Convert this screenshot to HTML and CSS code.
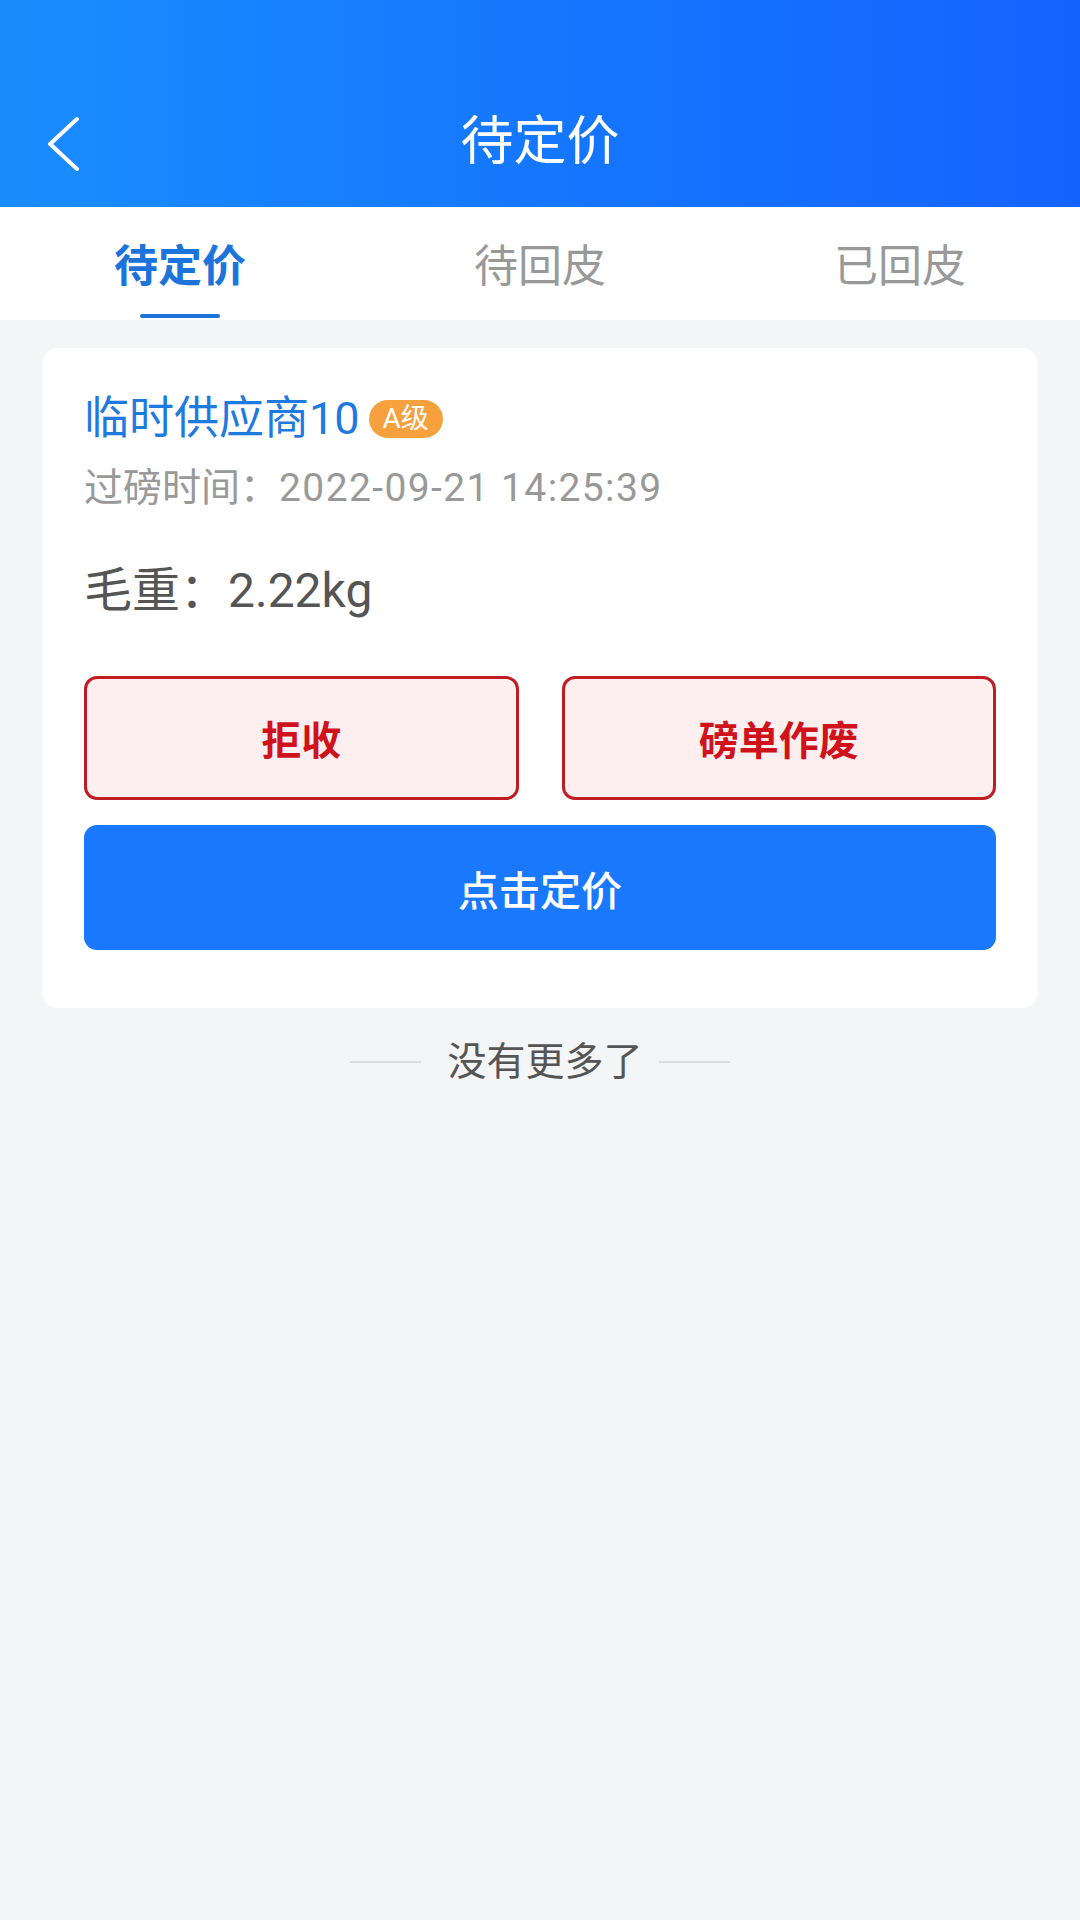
FILE: index.html
```html
<!DOCTYPE html>
<html lang="zh-CN">
<head>
<meta charset="utf-8">
<title>待定价</title>
<link rel="stylesheet" href="styles.css">
</head>
<body>
<div class="page">
  <header class="header">
    <div class="titlebar">
      <a class="back" aria-label="返回">
        <svg width="40" height="60" viewBox="0 0 40 60"><polyline points="33,8 6,33 33,58" fill="none" stroke="#fff" stroke-width="4" stroke-linecap="round" stroke-linejoin="round"/></svg>
      </a>
      <h1 class="title">待定价</h1>
    </div>
  </header>
  <nav class="tabs">
    <div class="tab active">待定价<span class="indicator"></span></div>
    <div class="tab">待回皮</div>
    <div class="tab">已回皮</div>
  </nav>
  <main class="list">
    <section class="card">
      <div class="name-row">
        <span class="name">临时供应商10</span>
        <span class="badge">A级</span>
      </div>
      <div class="time">过磅时间：<span class="num">2022-09-21 14:25:39</span></div>
      <div class="weight">毛重：2.22kg</div>
      <div class="actions">
        <button class="btn-outline">拒收</button>
        <button class="btn-outline">磅单作废</button>
      </div>
      <button class="btn-primary">点击定价</button>
    </section>
    <div class="nomore">
      <span class="line"></span>
      <span class="nomore-text">没有更多了</span>
      <span class="line"></span>
    </div>
  </main>
</div>
</body>
</html>
```

FILE: styles.css
```css
* { box-sizing: border-box; }
html, body { margin: 0; padding: 0; }
body {
  width: 1080px;
  min-height: 1920px;
  background: #f4f5f7;
  font-family: Roboto, "Noto Sans CJK SC", sans-serif;
}
.page { width: 1080px; min-height: 1920px; background: #f4f5f7; }

.header {
  height: 207px;
  padding-top: 77px;
  background: linear-gradient(90deg, #1a8dfe 0%, #1577fe 50%, #1463fe 100%);
}
.titlebar {
  height: 130px;
  display: flex;
  align-items: center;
  justify-content: center;
  position: relative;
}
.back {
  position: absolute;
  left: 44px;
  top: 34px;
  width: 40px;
  height: 60px;
  display: block;
}
.back svg { display: block; }
.title {
  margin: 0;
  color: #fff;
  font-size: 53px;
  font-weight: 400;
  line-height: 1;
}

.tabs {
  height: 113px;
  background: #fff;
  display: grid;
  grid-template-columns: repeat(3, 1fr);
}
.tab {
  position: relative;
  display: flex;
  align-items: center;
  justify-content: center;
  font-size: 44px;
  color: #999999;
  padding-bottom: 2px;
}
.tab.active {
  color: #1c73d9;
  font-weight: 700;
}
.indicator {
  position: absolute;
  left: 140px;
  width: 80px;
  bottom: 2px;
  height: 4px;
  border-radius: 2px;
  background: #1c73d9;
}

.list { padding: 28px 42px 0; }
.card {
  background: #fff;
  border-radius: 16px;
  padding: 40px 42px 58px;
  display: flex;
  flex-direction: column;
}
.name-row {
  height: 62px;
  display: flex;
  align-items: center;
}
.name {
  font-size: 45px;
  color: #1f7ae0;
  line-height: 62px;
}
.badge {
  margin-left: 9px;
  height: 38px;
  padding: 0 14px;
  border-radius: 19px;
  background: #f7a13e;
  color: #fff;
  font-size: 28px;
  line-height: 38px;
  display: inline-flex;
  align-items: center;
}
.time {
  margin-top: 12px;
  font-size: 39px;
  line-height: 52px;
  color: #999999;
}
.time .num { letter-spacing: 1.4px; }
.weight {
  margin-top: 45px;
  font-size: 48px;
  line-height: 64px;
  color: #555555;
}
.actions {
  margin-top: 53px;
  display: grid;
  grid-template-columns: 1fr 1fr;
  gap: 43px;
}
.btn-outline {
  height: 124px;
  border: 3px solid #bf1d24;
  border-radius: 13px;
  background: #fdeeef;
  color: #d0121c;
  font-family: inherit;
  font-size: 40px;
  font-weight: 700;
  padding: 0;
}
.btn-primary {
  margin-top: 25px;
  height: 125px;
  border: 0;
  border-radius: 13px;
  background: #1a78fe;
  color: #fff;
  font-family: inherit;
  font-size: 41px;
  font-weight: 500;
  padding: 0;
}

.nomore {
  margin-top: 26px;
  height: 56px;
  display: flex;
  align-items: center;
  justify-content: center;
  gap: 16px;
}
.line {
  width: 71px;
  height: 2px;
  background: #dddddd;
}
.nomore-text {
  margin-left: 10px;
  font-size: 39px;
  color: #555555;
  line-height: 56px;
}
```
